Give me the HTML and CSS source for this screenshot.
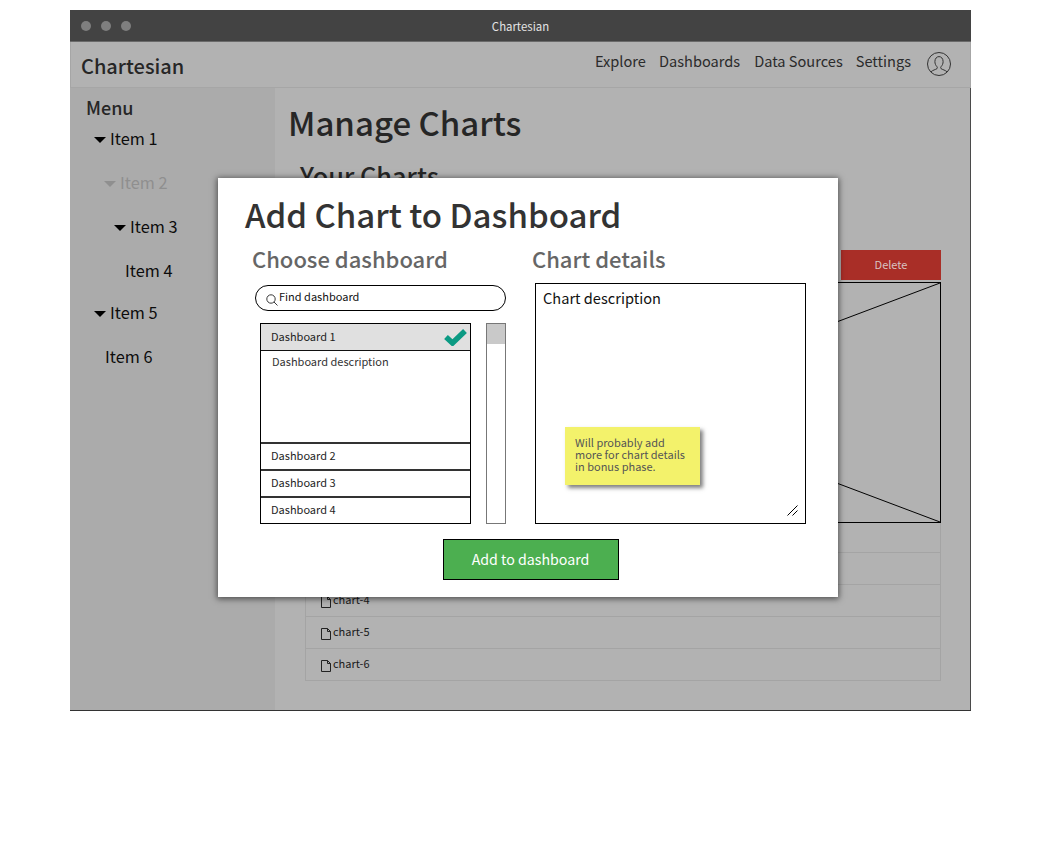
FILE: index.html
```html
<!DOCTYPE html>
<html lang="en">
<head>
<meta charset="utf-8">
<title>Chartesian</title>
<link rel="stylesheet" href="styles.css">
</head>
<body>
<div class="window">
  <div class="titlebar">
    <div class="dots"><span class="dot"></span><span class="dot"></span><span class="dot"></span></div>
    <div class="wintitle">Chartesian</div>
  </div>
  <header class="nav">
    <div class="brand">Chartesian</div>
    <nav class="links">
      <a class="l1">Explore</a><a class="l2">Dashboards</a><a class="l3">Data Sources</a><a class="l4">Settings</a>
      <svg class="avatar" width="26" height="26" viewBox="0 0 26 26" fill="none" stroke="#333" stroke-width="1">
        <circle cx="13" cy="13" r="11.500"/>
        <path d="M5 20.800c1.600-1.700 4.600-2.100 6-3.200.5-.5.4-1.500-.1-2-1.200-1.200-2-3-2-5 0-3 1.800-5 4.100-5s4.100 2 4.100 5c0 2-.8 3.800-2 5-.5.5-.6 1.500-.1 2 1.400 1.100 4.400 1.500 6 3.200"/>
      </svg>
    </nav>
  </header>
  <div class="body">
    <aside class="side">
      <div class="menu">Menu</div>
      <ul class="tree">
        <li class="i1"><span class="caret"></span>Item 1</li>
        <li class="i2 off"><span class="caret"></span>Item 2</li>
        <li class="i3"><span class="caret"></span>Item 3</li>
        <li class="i4">Item 4</li>
        <li class="i1"><span class="caret"></span>Item 5</li>
        <li class="i6">Item 6</li>
      </ul>
    </aside>
    <main class="main">
      <h1 class="page">Manage Charts</h1>
      <h2 class="sub">Your Charts</h2>
      <div class="actions"><div class="del">Delete</div></div>
      <div class="preview">
        <svg width="100%" height="100%" viewBox="0 0 636 240" preserveAspectRatio="none"><path d="M0 0L636 240M636 0L0 240" stroke="#000" stroke-width="1" fill="none"/></svg>
      </div>
      <ul class="rows">
        <li class="row"></li>
        <li class="row"></li>
        <li class="row"><svg class="file" width="10" height="12" viewBox="0 0 10 12"><path d="M.5.5h6l3 3v8h-9zM6.500.5v3h3" fill="none" stroke="#222"/></svg>chart-4</li>
        <li class="row"><svg class="file" width="10" height="12" viewBox="0 0 10 12"><path d="M.5.5h6l3 3v8h-9zM6.500.5v3h3" fill="none" stroke="#222"/></svg>chart-5</li>
        <li class="row"><svg class="file" width="10" height="12" viewBox="0 0 10 12"><path d="M.5.5h6l3 3v8h-9zM6.500.5v3h3" fill="none" stroke="#222"/></svg>chart-6</li>
      </ul>
    </main>
  </div>
  <section class="modal">
    <h2 class="mtitle">Add Chart to Dashboard</h2>
    <div class="cols">
      <div class="left">
        <h3 class="mhead">Choose dashboard</h3>
        <div class="search">
          <svg width="12" height="12" viewBox="0 0 12 12" fill="none" stroke="#222" stroke-width=".9"><circle cx="5" cy="5" r="4.200"/><path d="M8 8l3.500 3.500"/></svg>
          <span>Find dashboard</span>
        </div>
        <div class="pick">
          <div class="list">
            <div class="selected">Dashboard 1
              <svg class="check" width="23" height="18" viewBox="0 0 23 18"><path d="M2 9l6.500 6L21 3" fill="none" stroke="#0b9a83" stroke-width="5.500"/></svg>
            </div>
            <div class="desc">Dashboard description</div>
            <div class="item">Dashboard 2</div>
            <div class="item">Dashboard 3</div>
            <div class="item">Dashboard 4</div>
          </div>
          <div class="scroll"><div class="thumb"></div></div>
        </div>
      </div>
      <div class="right">
        <h3 class="mhead">Chart details</h3>
        <div class="details">
          Chart description
          <div class="sticky">Will probably add more for chart details in bonus phase.</div>
          <svg class="grip" width="11" height="11" viewBox="0 0 11 11" stroke="#000" stroke-width="1" fill="none"><path d="M.5 10.500l10-10M5.500 10.500l5-5"/></svg>
        </div>
      </div>
    </div>
    <div class="foot"><div class="add">Add to dashboard</div></div>
  </section>
</div>
</body>
</html>
```
FILE: styles.css
```css
* { box-sizing: border-box; }
html, body { margin: 0; padding: 0; background: #fff; }
body { font-family: "Noto Sans CJK SC", "Noto Sans", sans-serif; height: 862px; padding: 10px 0 0 70px; overflow: hidden; }
h1, h2, h3, ul { margin: 0; padding: 0; list-style: none; }

.window { position: relative; width: 901px; height: 701px; display: flex; flex-direction: column; border-bottom: 1px solid #333; }

.titlebar { height: 32px; background: #434343; display: flex; align-items: center; position: relative; flex: none; border-bottom: 1px solid #6a6a6a; }
.dots { display: flex; gap: 10px; padding-left: 11px; }
.dot { width: 10px; height: 10px; border-radius: 50%; background: #7f7f7f; }
.wintitle { position: absolute; left: 0; right: 0; top: 7px; text-align: center; color: #e4e4e4; font-size: 11.400px; line-height: 18px; }

.nav { height: 46px; flex: none; display: flex; justify-content: space-between; background: #b2b2b2; border: 1px solid #a6a6a6; border-top: 0; padding: 0 18px 0 10px; }
.brand { font-size: 20px; font-weight: 500; color: #262626; line-height: 32px; padding-top: 8px; }
.links { display: flex; color: #2b2b2b; font-size: 14.600px; line-height: 24px; padding-top: 7px; }
.links a { display: block; }
.l2 { margin-left: 13px; }
.l3 { margin-left: 14px; }
.l4 { margin-left: 13px; }
.avatar { margin: 2px 0 0 15px; }

.body { flex: 1; display: flex; min-height: 0; border-right: 1px solid #4a4a4a; }
.side { width: 205px; flex: none; background: #ababab; padding: 6px 0 0 16px; }
.menu { font-size: 18px; font-weight: 500; color: #262626; line-height: 26px; }
.tree { margin-top: 4px; font-size: 16.300px; color: #0c0c0c; line-height: 24px; }
.tree li { height: 44px; display: flex; padding-top: 2px; }
.tree .i4 { height: 42px; }
.caret { width: 0; height: 0; border: 6px solid transparent; border-top: 6px solid #000; border-bottom: 0; margin: 11px 4px 0 0; }
.i1 { padding-left: 8px; }
.i2 { padding-left: 18px; }
.i3 { padding-left: 28px; }
.i4 { padding-left: 39px; }
.i6 { padding-left: 19px; }
.off { color: #8f8f8f; }
.off .caret { border-top-color: #8f8f8f; }

.main { flex: 1; min-width: 0; background: #b2b2b2; padding: 10px 29px 0 13px; }
.page { font-size: 33px; font-weight: 500; color: #262626; line-height: 48px; }
.sub { font-size: 25.300px; font-weight: 500; color: #262626; line-height: 36px; margin: 11px 0 0 12px; }
.actions { display: flex; justify-content: flex-end; margin-top: 57px; }
.del { width: 100px; height: 30px; background: #a92e27; color: #d8c4c2; font-size: 11px; line-height: 29px; text-align: center; }
.preview { margin: 2px 0 0 17px; height: 241px; border: 1px solid #000; }
.preview svg { display: block; }
.rows { margin-left: 17px; }
.row { height: 32px; border: 1px solid #a4a4a4; border-top: 0; font-size: 11px; color: #1a1a1a; display: flex; align-items: flex-start; padding: 6px 0 0 15px; line-height: 16px; }
.row:nth-child(1) { height: 30px; }
.file { margin: 5px 2px 0 0; flex: none; }

.modal { position: absolute; left: 148px; top: 168px; width: 620px; height: 419px; background: #fff; box-shadow: 0 1px 6px 1px rgba(0,0,0,.55); padding: 11px 0 0 27px; }
.mtitle { font-size: 33px; font-weight: 500; color: #333; line-height: 50px; }
.cols { display: flex; margin-top: 2px; }
.left { width: 283px; padding-left: 7px; }
.mhead { font-size: 22px; font-weight: 500; color: #666; line-height: 34px; }
.search { margin: 10px 0 0 3px; width: 251px; height: 26px; border: 1px solid #000; border-radius: 13px; display: flex; align-items: center; font-size: 11px; color: #111; padding-left: 10px; }
.search svg { margin: 3px 1px 0 0; }
.search span { line-height: 16px; margin-top: -4px; }
.pick { display: flex; margin: 12px 0 0 8px; height: 201px; gap: 15px; }
.list { width: 211px; border: 1px solid #000; font-size: 11px; color: #1e1e1e; line-height: 24px; display: flex; flex-direction: column; }
.selected { height: 27px; background: #e0e0e0; border-bottom: 1px solid #111; padding: 0 0 2px 10px; display: flex; justify-content: space-between; align-items: center; }
.check { margin: 2px 3px 0 0; }
.desc { height: 92px; padding-left: 11px; line-height: 20px; color: #333; }
.item { height: 27px; border-top: 2px solid #333; padding-left: 10px; line-height: 23px; }
.scroll { width: 20px; border: 1px solid #777; }
.thumb { height: 20px; background: #c9c9c9; }
.right .mhead { margin-left: 4px; }
.details { position: relative; margin: 8px 0 0 7px; width: 271px; height: 241px; border: 1px solid #000; padding: 2px 7px; font-size: 14.600px; line-height: 24px; color: #111; }
.sticky { position: absolute; left: 29px; top: 143px; width: 135px; height: 58px; background: #f3f26b; color: #555; font-size: 11px; line-height: 12px; padding: 9px 10px 0 10px; box-shadow: 3px 3px 4px rgba(0,0,0,.5); }
.grip { position: absolute; right: 7px; bottom: 7px; }
.foot { display: flex; justify-content: center; margin: 15px 0 0 -27px; padding-left: 5px; }
.add { width: 176px; height: 41px; background: #4caf50; border: 1px solid #000; color: #fff; font-size: 14.200px; line-height: 39px; text-align: center; }
```
